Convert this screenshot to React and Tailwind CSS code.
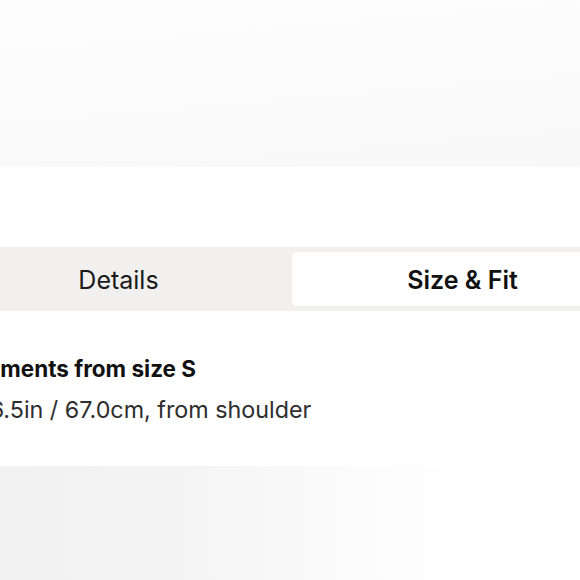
const font = { fontFamily: "Inter, 'Helvetica Neue', Arial, sans-serif" };

function SizeFitPanel() {
  return (
    <div className="h-[580px] w-[580px] overflow-hidden bg-white" style={font}>
      <div className="h-[167px] bg-[linear-gradient(175deg,#fefdfd_0%,#fcfbfb_50%,#f8f8f8_100%)]" />
      <div className="mt-[80px] -ml-[62px] w-[700px]">
        <div className="flex h-[64px] gap-[8px] bg-[#f1f0ef] p-[5px]">
          <button className="flex flex-1 items-center justify-center pt-[3px] text-[25px] text-[#1a1a1a]">
            <span className="ml-[10px]">Details</span>
          </button>
          <button className="flex flex-1 items-center justify-center rounded-[5px] bg-white pt-[3px] text-[25px] font-semibold text-[#111]">
            Size &amp; Fit
          </button>
        </div>
        <div className="mt-[44px]">
          <p className="-ml-[34px] text-[22.5px] leading-[28px] font-bold text-[#111]">Measurements from size S</p>
          <p className="-ml-[52px] mt-[13px] text-[23.3px] leading-[28px] text-[#2e2e2e]">
            Length: 26.5in / 67.0cm, from shoulder
          </p>
        </div>
      </div>
      <div className="mt-[42px] h-[140px] bg-[linear-gradient(90deg,#f1f1f1_0%,#f5f5f5_35%,#fbfbfb_60%,#ffffff_80%)]" />
    </div>
  );
}

export default function App() {
  return <SizeFitPanel />;
}
